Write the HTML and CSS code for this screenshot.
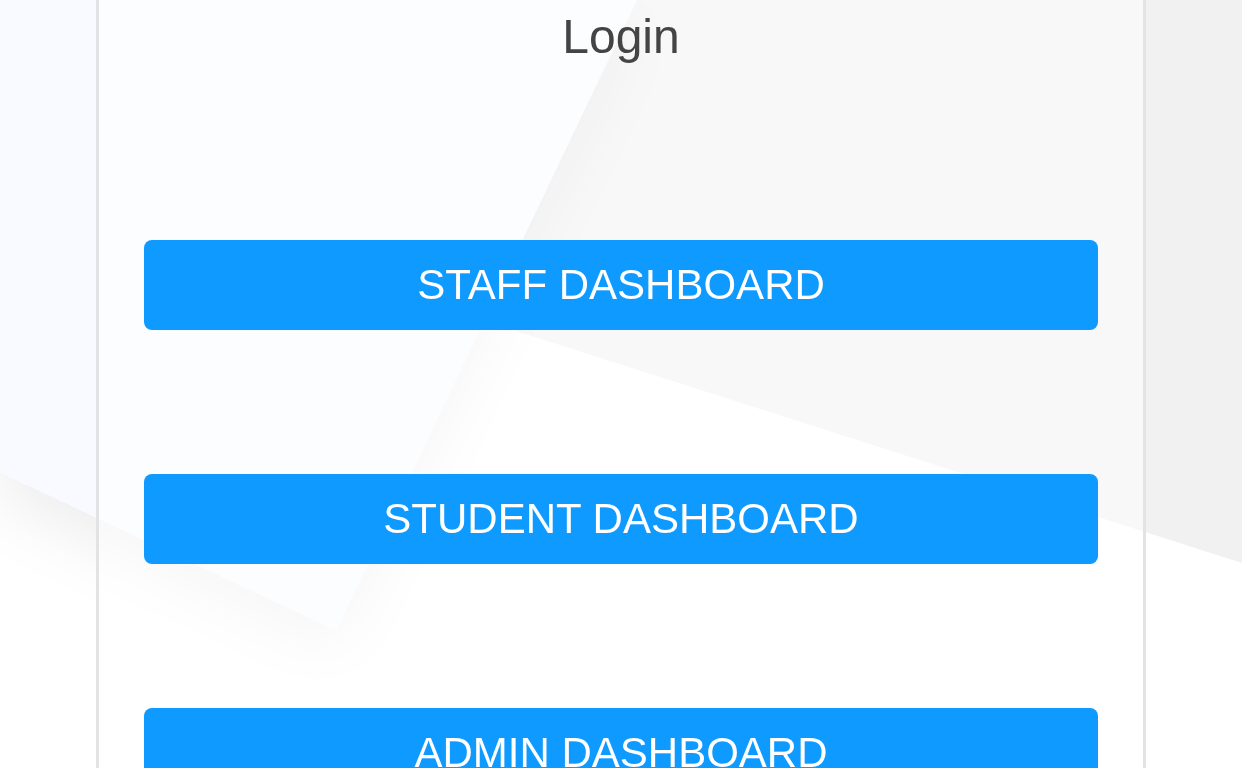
FILE: index.html
```html
<!DOCTYPE html>
<html lang="en">
<head>
<meta charset="utf-8">
<title>Login</title>
<link rel="stylesheet" href="styles.css">
</head>
<body>
<svg class="backdrop" viewBox="0 0 1242 768" preserveAspectRatio="none" aria-hidden="true">
  <defs>
    <filter id="soft" x="-30%" y="-30%" width="160%" height="160%">
      <feDropShadow dx="0" dy="22" stdDeviation="32" flood-color="#000" flood-opacity="0.07"/>
    </filter>
  </defs>
  <rect x="0" y="0" width="1242" height="768" fill="#ffffff"/>
  <polygon points="300,0 1242,0 1242,563 300,262" fill="#f1f1f1"/>
  <polygon points="0,0 637,0 336,630 0,472" fill="#f8faff" filter="url(#soft)"/>
</svg>
<main class="card">
  <h1 class="title">Login</h1>
  <nav class="actions">
    <a class="dash-btn" href="#">STAFF DASHBOARD</a>
    <a class="dash-btn" href="#">STUDENT DASHBOARD</a>
    <a class="dash-btn" href="#">ADMIN DASHBOARD</a>
  </nav>
</main>
</body>
</html>
```
FILE: styles.css
```css
html, body {
  margin: 0;
  padding: 0;
  height: 100%;
  overflow: hidden;
}

body {
  font-family: "Liberation Sans", Arial, sans-serif;
  background: #ffffff;
}

.backdrop {
  position: fixed;
  inset: 0;
  width: 100%;
  height: 100%;
  z-index: 0;
}

.card {
  position: relative;
  z-index: 1;
  box-sizing: border-box;
  width: 1050px;
  min-height: 100vh;
  margin: 0 auto;
  padding: 13px 45px 40px;
  border-left: 3px solid #e3e3e3;
  border-right: 3px solid #e3e3e3;
  background: rgba(255, 255, 255, 0.5);
}

.title {
  margin: 0;
  font-size: 48px;
  line-height: 48px;
  font-weight: 400;
  color: #444444;
  text-align: center;
}

.actions {
  display: flex;
  flex-direction: column;
  gap: 144px;
  margin-top: 179px;
}

.dash-btn {
  display: block;
  height: 90px;
  line-height: 90px;
  border-radius: 8px;
  background: #0f9aff;
  color: #ffffff;
  font-size: 42px;
  text-align: center;
  text-decoration: none;
}
```
